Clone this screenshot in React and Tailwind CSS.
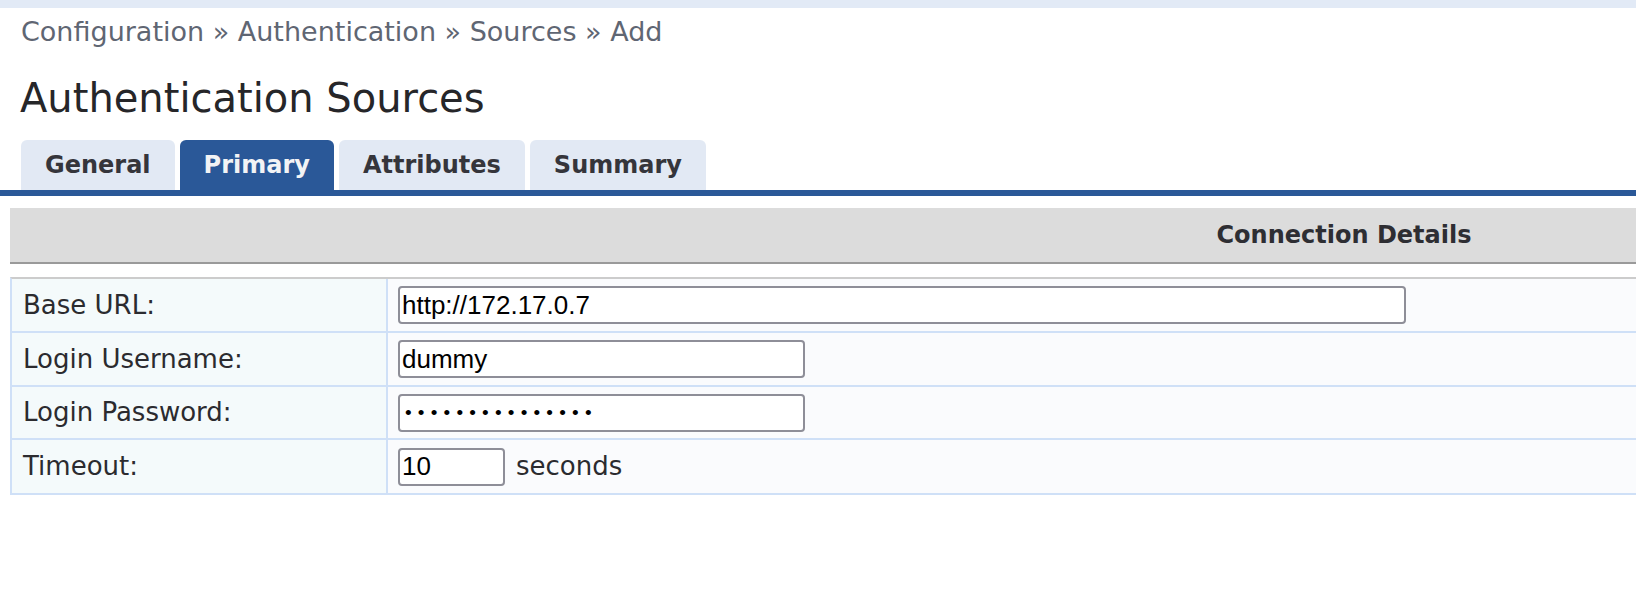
import React from "react";

const tabs = [
  { name: "General", active: false },
  { name: "Primary", active: true },
  { name: "Attributes", active: false },
  { name: "Summary", active: false },
];

const inputCls =
  "h-[38px] rounded-[4px] border-2 border-[#8e8e98] bg-white px-[2px] text-[26px] text-black outline-none font-['Liberation_Sans',Arial,sans-serif]";

function Row({ label, children, h, last }) {
  return (
    <div className={`flex ${h} ${last ? "" : "border-b-2 border-[#cfe0f7]"}`}>
      <div className="flex w-[376px] shrink-0 items-center border-r-2 border-[#cfe0f7] bg-[#f4fafb] pl-[11px]">
        {label}
      </div>
      <div className="flex flex-1 items-center gap-[11px] bg-[#fafbfd] pl-[10px]">{children}</div>
    </div>
  );
}

export default function App() {
  return (
    <div className="h-[594px] w-full overflow-hidden bg-white font-['DejaVu_Sans',Verdana,sans-serif]">
      <div className="h-[8px] bg-[#e2eaf6]" />

      {/* breadcrumb */}
      <div className="mt-[9px] pl-[21px] text-[27px] leading-[30px] text-[#5f6673]">
        Configuration » Authentication » Sources » Add
      </div>

      <h1 className="mt-[27px] pl-[20px] text-[40px] leading-[48px] text-[#262629]">
        Authentication Sources
      </h1>

      {/* tabs */}
      <div className="mt-[18px] flex gap-[5px] pl-[21px]">
        {tabs.map((t) => (
          <div
            key={t.name}
            className={`flex h-[50px] items-center rounded-t-[6px] px-[24px] text-[24px] font-bold ${
              t.active ? "bg-[#2a5898] text-[#f2f3f5]" : "bg-[#e2e9f4] text-[#35353b]"
            }`}
          >
            {t.name}
          </div>
        ))}
      </div>
      <div className="h-[6px] bg-[#2a5898]" />

      <div className="ml-[10px] mt-[12px] w-[2668px]">
        <div className="flex h-[56px] items-center justify-center border-b-2 border-[#9a9a9a] bg-[#dcdcdc] text-[24px] font-bold text-[#2e2e33]">
          Connection Details
        </div>

        <div className="mt-[13px] border-t-2 border-l-2 border-b-2 border-t-[#cccccc] border-l-[#cfe0f7] border-b-[#cfe0f7] text-[26px] text-[#2b2b2f]">
          <Row label="Base URL:" h="h-[54px]">
            <input readOnly value="http://172.17.0.7" className={`${inputCls} w-[1008px]`} />
          </Row>
          <Row label="Login Username:" h="h-[54px]">
            <input readOnly value="dummy" className={`${inputCls} w-[407px]`} />
          </Row>
          <Row label="Login Password:" h="h-[53px]">
            <input
              readOnly
              value="•••••••••••••••"
              className={`${inputCls} w-[407px] pl-[5px] !text-[19px] tracking-[6.2px]`}
            />
          </Row>
          <Row label="Timeout:" h="h-[53px]" last>
            <input readOnly value="10" className={`${inputCls} w-[107px]`} />
            <span>seconds</span>
          </Row>
        </div>
      </div>
    </div>
  );
}
